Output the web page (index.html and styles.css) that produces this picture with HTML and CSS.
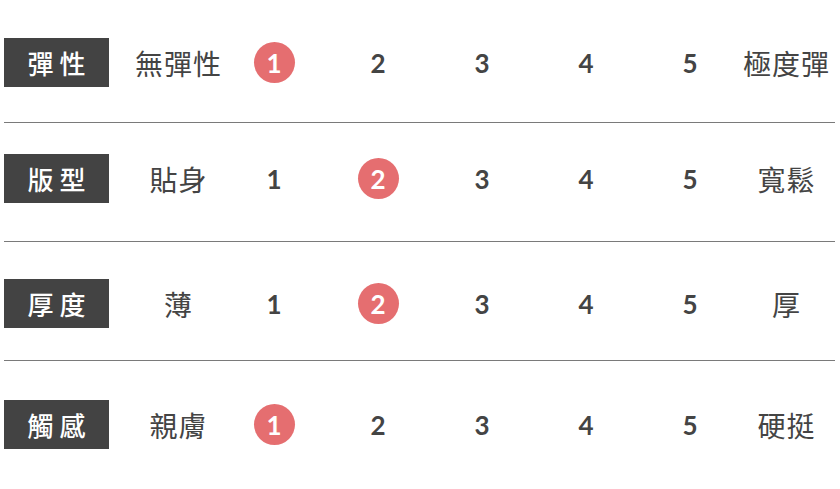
FILE: index.html
```html
<!DOCTYPE html>
<html lang="zh-Hant">
<head>
<meta charset="utf-8">
<link rel="stylesheet" href="styles.css">
</head>
<body>
<div class="chart">
  <div class="row">
    <div class="label">彈性</div>
    <div class="cell text">無彈性</div>
    <div class="cell num"><span class="dot">1</span></div>
    <div class="cell num">2</div>
    <div class="cell num">3</div>
    <div class="cell num">4</div>
    <div class="cell num">5</div>
    <div class="cell text">極度彈</div>
  </div>
  <div class="rule rule-a"></div>
  <div class="row">
    <div class="label">版型</div>
    <div class="cell text">貼身</div>
    <div class="cell num">1</div>
    <div class="cell num"><span class="dot">2</span></div>
    <div class="cell num">3</div>
    <div class="cell num">4</div>
    <div class="cell num">5</div>
    <div class="cell text">寬鬆</div>
  </div>
  <div class="rule rule-b"></div>
  <div class="row">
    <div class="label">厚度</div>
    <div class="cell text">薄</div>
    <div class="cell num">1</div>
    <div class="cell num"><span class="dot">2</span></div>
    <div class="cell num">3</div>
    <div class="cell num">4</div>
    <div class="cell num">5</div>
    <div class="cell text">厚</div>
  </div>
  <div class="rule rule-c"></div>
  <div class="row">
    <div class="label">觸感</div>
    <div class="cell text">親膚</div>
    <div class="cell num"><span class="dot">1</span></div>
    <div class="cell num">2</div>
    <div class="cell num">3</div>
    <div class="cell num">4</div>
    <div class="cell num">5</div>
    <div class="cell text">硬挺</div>
  </div>
</div>
</body>
</html>
```

FILE: styles.css
```css
html, body {
  margin: 0;
  padding: 0;
  background: #ffffff;
}

.chart {
  display: flex;
  flex-direction: column;
  padding-top: 38px;
  width: 840px;
}

.row {
  display: grid;
  grid-template-columns: 130px 88px repeat(5, 104px) 88px;
  height: 49px;
  margin-left: 4px;
  align-items: center;
}

.label {
  width: 105px;
  height: 49px;
  background: #434343;
  color: #ffffff;
  font-family: "Noto Sans CJK TC", "Noto Sans CJK SC", sans-serif;
  font-weight: 500;
  font-size: 26px;
  letter-spacing: 6px;
  padding-left: 6px;
  box-sizing: border-box;
  display: flex;
  align-items: center;
  justify-content: center;
  line-height: 1;
}

.cell {
  display: flex;
  align-items: center;
  justify-content: center;
  height: 49px;
  white-space: nowrap;
  color: #444444;
  line-height: 1;
}

.text {
  font-family: "Noto Sans CJK TC", "Noto Sans CJK SC", sans-serif;
  font-size: 28px;
  letter-spacing: 1px;
  padding-left: 1px;
}

.num {
  font-family: "Lato", "Open Sans", sans-serif;
  font-weight: 700;
  font-size: 26px;
}

.dot {
  width: 41px;
  height: 41px;
  border-radius: 50%;
  background: #e56e70;
  color: #ffffff;
  display: flex;
  align-items: center;
  justify-content: center;
}

.rule {
  height: 1px;
  background: #7a7a7a;
  margin-left: 4px;
  margin-right: 5px;
}

.rule-a { margin-top: 35px; margin-bottom: 31px; }
.rule-b { margin-top: 38px; margin-bottom: 37px; }
.rule-c { margin-top: 32px; margin-bottom: 39px; }
```
